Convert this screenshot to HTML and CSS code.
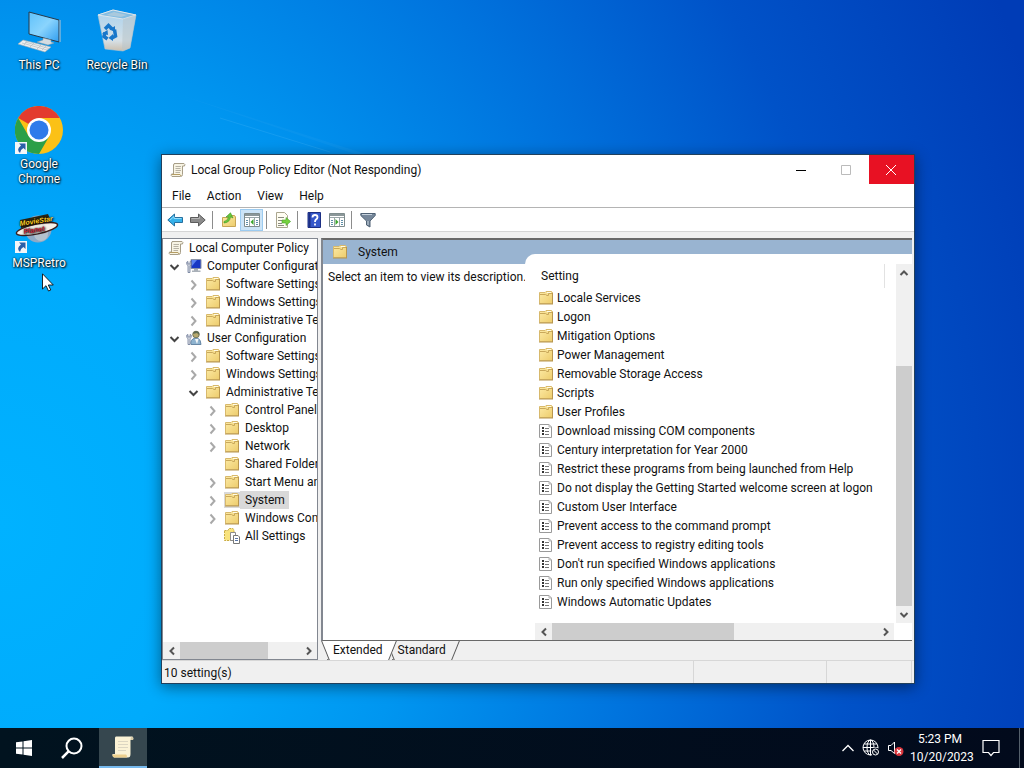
FILE: index.html
```
<!DOCTYPE html>
<html lang="en">
<head>
  <meta charset="UTF-8" />
  <title>Local Group Policy Editor</title>
  <link rel="stylesheet" href="styles.css">
</head>
<body>

  <!-- shared icons -->
  <svg class="defs" aria-hidden="true">
    <defs>
      <linearGradient id="gFolder" x1="0" y1="0" x2="1" y2="1">
        <stop offset="0" stop-color="#fdeba6"/><stop offset="1" stop-color="#edcc6c"/>
      </linearGradient>
      <linearGradient id="gScreen" x1="0" y1="0" x2="1" y2="1">
        <stop offset="0" stop-color="#5fc1fb"/><stop offset="0.5" stop-color="#8ad4fd"/><stop offset="1" stop-color="#2f9df0"/>
      </linearGradient>
      <linearGradient id="gBin" x1="0" y1="0" x2="0" y2="1">
        <stop offset="0" stop-color="#a9d2ee"/><stop offset="0.75" stop-color="#d6e0e6"/><stop offset="1" stop-color="#cbbfae"/>
      </linearGradient>
    </defs>
    <symbol id="folder" viewBox="0 0 16 16">
      <path d="M1.500 2.500H7L8 1.500H13.500L14.500 2.500V13.500H1.500Z" fill="url(#gFolder)" stroke="#d8b96c"/>
      <path d="M2 4.500H7.500L9 5.500H10.500V3.500H14" fill="none" stroke="#c9a85a"/>
      <path d="M9 2.500H13" stroke="#fffbe8"/>
      <path d="M1 14H15M14.500 3V14" stroke="#b8964e"/>
    </symbol>
    <symbol id="setting" viewBox="0 0 16 16">
      <path d="M1.500 1.500H11L13.500 4V14.500H1.500Z" fill="#fff" stroke="#9a9a9a"/>
      <path d="M11 1.500V4H13.500" fill="none" stroke="#b5b5b5"/>
      <path d="M4 4H6V6H4ZM4 7H6V9H4ZM4 10H6V12H4Z" fill="#333"/>
      <path d="M7 5.500H11M7 8.500H11M7 11.500H11" stroke="#777"/>
    </symbol>
    <symbol id="scroll" viewBox="0 0 16 16">
      <path d="M4 1.500H14Q15.500 2 14.500 4H12.500V12.500Q12.500 14.500 10.500 14.500H2Q.5 13.500 1.500 12H3.500V3Q3.500 1.500 5 1.500Z" fill="#f8f4e4" stroke="#a79e88"/>
      <path d="M5.500 4.500H11M5.500 6.500H10.500M5.500 8.500H11M5.500 10.500H10" stroke="#b7b2a4"/>
      <path d="M2 12.500H10L11 14" fill="none" stroke="#b59d64"/>
    </symbol>
    <symbol id="computer" viewBox="0 0 16 16">
      <path d="M5 1.500H15V10.500H5Z" fill="#1838c4" stroke="#8a93a8"/>
      <path d="M6 2H11L6 8Z" fill="#5b84f2"/>
      <path d="M8 11H12V12.500H14.500V14H6V12.500H8Z" fill="#a9b0b8"/>
      <path d="M.8 4V6.500L2 7.500V14.500H4V7.500L5.200 6.500V4L4 3.500V6H2V3.500Z" fill="#d8dce2" stroke="#5c6c8c" stroke-width=".7"/>
    </symbol>
    <symbol id="user" viewBox="0 0 16 16">
      <path d="M5 14.500Q4 9.500 9 8H11.500Q15 9.500 15 14.500Z" fill="#8eb3cf" stroke="#6787a5"/>
      <circle cx="10" cy="4.500" r="3.300" fill="#b8aa6e" stroke="#63664c" stroke-width=".8"/>
      <path d="M7 4Q8 0 11 1.200Q14 2 13 5L11 3Z" fill="#5d6a53"/>
      <path d="M9 9L11 14L12.500 9Z" fill="#f3f6f8"/>
      <path d="M.8 5V7.500L2 8.500V14.500H4V8.500L5.200 7.500V5L4 4.500V7H2V4.500Z" fill="#e2e5ea" stroke="#5c6c8c" stroke-width=".7"/>
    </symbol>
    <symbol id="allset" viewBox="0 0 16 16">
      <path d="M.5 2.500H4L5 .5H9L10 2V12.500H.5Z" fill="#f8e37e" stroke="#c9ab45" stroke-dasharray="2 1"/>
      <path d="M6.500 4.500H11.500V12.500H6.500Z" fill="#fff" stroke="#8d8d8d"/>
      <path d="M9.500 7.500H14L15.500 9V15.500H9.500Z" fill="#fff" stroke="#777"/>
      <path d="M11 10.500H14M11 12.500H14" stroke="#5a76a8"/>
    </symbol>
    <symbol id="right" viewBox="0 0 12 12">
      <path d="M4.500 1.500L8.500 6L4.500 10.500" fill="none" stroke="#a9a9a9" stroke-width="2"/>
    </symbol>
    <symbol id="down" viewBox="0 0 12 12">
      <path d="M2.500 4L6.500 8L10.500 4" fill="none" stroke="#444" stroke-width="2"/>
    </symbol>
    <symbol id="arrow" viewBox="0 0 12 12">
      <path d="M8 2.500L4.500 6L8 9.500" fill="none" stroke="#555" stroke-width="2"/>
    </symbol>
    <symbol id="shortcut" viewBox="0 0 12 12">
      <rect width="12" height="12" fill="#f4f6f8"/>
      <path d="M4 1.500H10.500V8L8.400 6Q5.500 7.500 5 11Q.8 7.500 6 3.600Z" fill="#2b5fa8"/>
    </symbol>
    <symbol id="pane" viewBox="0 0 16 16">
      <path d="M.5 1.500H15.500V14.500H.5Z" fill="#fff" stroke="#7f8c8d"/>
      <path d="M1 2H15V4H1Z" fill="#8b9799"/>
      <path d="M1 5.500H15M5.500 6V14M10.500 6V14" stroke="#9aa6a8"/>
      <path d="M2 8.500H4M2 10.500H4M2 12.500H4M12 8.500H14M12 10.500H14M12 12.500H14" stroke="#5f8fa8"/>
    </symbol>
  </svg>

  <main class="desktop">
    <svg class="beam" viewBox="0 0 1024 728" preserveAspectRatio="none" aria-hidden="true">
      <path d="M180 95L480 190L560 250L520 210Z" fill="#fff" opacity=".03"/>
      <path d="M220 118L330 152" stroke="#7fd0ff" opacity=".15"/>
    </svg>

    <div class="icons">
      <a class="shortcut" href="#">
        <svg viewBox="0 0 48 48">
          <path d="M14 5L44 13V35L14 27Z" fill="url(#gScreen)" stroke="#26394a"/>
          <path d="M45 13V35" stroke="#b9c8d3"/>
          <path d="M28 31L36 33V35L39 36L33 38L22 35L28 33Z" fill="#d5dce1" stroke="#8b979f" stroke-width=".5"/>
          <path d="M8 33L36 40L30 45L3 37Z" fill="#eceff1" stroke="#a2abb0" stroke-width=".6"/>
          <path d="M7 36L32 43M10 35L34 41.500M12 34L9 38M19 36L15 40M26 38L22 42M31 39L27 43" stroke="#b5bcc0" stroke-width=".7"/>
        </svg>
        <span>This PC</span>
      </a>
      <a class="shortcut" href="#">
        <svg viewBox="0 0 48 48">
          <path d="M5 8L20 3L43 8L37 41L30 44L12 42Z" fill="url(#gBin)" stroke="#b9c6ce" stroke-width=".6"/>
          <path d="M5 8L20 3L43 8L30 12Z" fill="#83bde2" stroke="#dbe6ed"/>
          <path d="M30 12L43 8L37 41L29 44Z" fill="#b8c4cb" opacity=".55"/>
          <path d="M13 8L21 5L34 8L28 10Z" fill="#a9c9dd"/>
          <g fill="none" stroke="#1877ca" stroke-width="3.500">
            <path d="M12 22L15.500 18.500L19 22"/>
            <path d="M21.500 22.500L22.500 29L18 31.500"/>
            <path d="M14.500 32L11 29.500L12 25.500"/>
          </g>
          <path d="M16.500 22.500L22 19V25ZM20 27V34L15.500 31ZM9 26.500L14.500 23L15 28Z" fill="#1877ca"/>
        </svg>
        <span>Recycle Bin</span>
      </a>
      <a class="shortcut" href="#">
        <svg viewBox="0 0 48 48">
          <circle cx="24" cy="24" r="24" fill="#fbc116"/>
          <path d="M24 24V12H44.800A24 24 0 0 0 3.200 12Z" fill="#e33b2e"/>
          <path d="M3.200 12L13.600 30L24 36L34.400 30L24 48A24 24 0 0 1 3.200 12Z" fill="#2c9f48"/>
          <circle cx="24" cy="24" r="12" fill="#fff"/>
          <circle cx="24" cy="24" r="9.500" fill="#2f7bea"/>
          <use href="#shortcut" y="36" width="12" height="12"/>
        </svg>
        <span>Google Chrome</span>
      </a>
      <a class="shortcut msp" href="#">
        <svg viewBox="0 0 48 48">
          <circle cx="23" cy="24" r="13.500" fill="#8fa9c4"/>
          <circle cx="26" cy="29" r="7" fill="#b4c1cd"/>
          <ellipse cx="22" cy="24" rx="21" ry="5" transform="rotate(-12 22 24)" fill="#f5f1ea" stroke="#3a2020" stroke-width="1.500"/>
          <path d="M5 15L33 9L36 16L6 23Z" fill="#2a2412"/>
          <g class="logo-text">
            <text x="5" y="21" transform="rotate(-9 5 21)" fill="#ffcf25">MovieStar</text>
            <text x="9" y="29" transform="rotate(-9 9 29)" fill="#c51f35">Planet</text>
          </g>
          <use href="#shortcut" y="36" width="12" height="12"/>
        </svg>
        <span>MSPRetro</span>
      </a>
    </div>

    <section class="window">
      <header class="titlebar">
        <svg class="icon"><use href="#scroll"/></svg>
        <h1>Local Group Policy Editor (Not Responding)</h1>
        <button class="control" aria-label="Minimize"><svg viewBox="0 0 10 10"><path d="M0 5.500H10" stroke="#000"/></svg></button>
        <button class="control" aria-label="Maximize"><svg viewBox="0 0 10 10"><path d="M.5 .5H9.500V9.500H.5Z" fill="none" stroke="#bbb"/></svg></button>
        <button class="control close" aria-label="Close"><svg viewBox="0 0 10 10"><path d="M0 0L10 10M10 0L0 10" stroke="#fff"/></svg></button>
      </header>

      <nav class="menubar">
        <button>File</button>
        <button>Action</button>
        <button>View</button>
        <button>Help</button>
      </nav>

      <div class="toolbar">
        <button aria-label="Back"><svg class="icon" viewBox="0 0 16 16"><path d="M.8 8L7.500 2V5.500H15.500V10.500H7.500V14Z" fill="#35b1ea" stroke="#276f9e"/><path d="M3 8L7 4.500V6.500H14.500" fill="none" stroke="#95dcfa"/></svg></button>
        <button aria-label="Forward"><svg class="icon" viewBox="0 0 16 16"><path d="M15.200 8L8.500 2V5.500H.5V10.500H8.500V14Z" fill="#8b8b8b" stroke="#5c5c5c"/><path d="M1.500 6.500H9.500V4.500" fill="none" stroke="#b5b5b5"/></svg></button>
        <i></i>
        <button aria-label="Up one level"><svg class="icon" viewBox="0 0 16 16"><path d="M1.500 5.500H8L9 3.500H13.500L14.500 5V14.500H1.500Z" fill="url(#gFolder)" stroke="#c6a555"/><path d="M3 9.500Q7 9 7.500 4.500L5 5L9.500 .8L12 6L9.500 4.800Q9 10.500 3 11Z" fill="#67c93a" stroke="#3c9424" stroke-width=".6"/></svg></button>
        <button class="on" aria-label="Show console tree"><svg class="icon" viewBox="0 0 16 16"><use href="#pane"/><path d="M9.500 7L6.500 10L9.500 13Z" fill="#3ba52d"/></svg></button>
        <i></i>
        <button aria-label="Export list"><svg class="icon" viewBox="0 0 16 16"><path d="M1.500 .5H9.500L12.500 3.500V15.500H1.500Z" fill="#fffdf2" stroke="#aaa68f"/><path d="M3 5.500H9M3 8.500H7M3 11.500H7M3 13.500H9" stroke="#8b8b80"/><path d="M7 8H11V5.500L15.600 9.500L11 13.500V11H7Z" fill="#77d13f" stroke="#48a32a" stroke-width=".6"/></svg></button>
        <i></i>
        <button aria-label="Help"><svg class="icon" viewBox="0 0 16 16"><path d="M2 .5H14.500V15.500H2Z" fill="#3557c9" stroke="#1c2f83"/><path d="M2.500 1H4.500V15H2.500Z" fill="#1c2f83"/><path d="M6.500 5.500Q6.500 3 9 3Q11.500 3 11.500 5.200Q11.500 6.500 10 7.500Q9 8.300 9 10M9 11.500V13.500" fill="none" stroke="#fff" stroke-width="1.800"/></svg></button>
        <button aria-label="Show action pane"><svg class="icon" viewBox="0 0 16 16"><use href="#pane"/><path d="M6.500 7L9.500 10L6.500 13Z" fill="#3ba52d"/></svg></button>
        <i></i>
        <button aria-label="Filter"><svg class="icon" viewBox="0 0 16 16"><path d="M.8 1.500H15.200V3.500L10 9V15L6.500 13V9L.8 3.500Z" fill="#76879a" stroke="#4f6174"/><path d="M2 2.500H12M8 9V13" stroke="#c6d2dd"/></svg></button>
      </div>

      <div class="panes">
        <div class="tree-pane">
          <ul class="tree">
            <li class="l0"><svg class="icon"><use href="#scroll"/></svg><span>Local Computer Policy</span></li>
            <li class="l1"><svg class="chev"><use href="#down"/></svg><svg class="icon"><use href="#computer"/></svg><span>Computer Configuration</span></li>
            <li class="l2"><svg class="chev"><use href="#right"/></svg><svg class="icon"><use href="#folder"/></svg><span>Software Settings</span></li>
            <li class="l2"><svg class="chev"><use href="#right"/></svg><svg class="icon"><use href="#folder"/></svg><span>Windows Settings</span></li>
            <li class="l2"><svg class="chev"><use href="#right"/></svg><svg class="icon"><use href="#folder"/></svg><span>Administrative Templates</span></li>
            <li class="l1"><svg class="chev"><use href="#down"/></svg><svg class="icon"><use href="#user"/></svg><span>User Configuration</span></li>
            <li class="l2"><svg class="chev"><use href="#right"/></svg><svg class="icon"><use href="#folder"/></svg><span>Software Settings</span></li>
            <li class="l2"><svg class="chev"><use href="#right"/></svg><svg class="icon"><use href="#folder"/></svg><span>Windows Settings</span></li>
            <li class="l2"><svg class="chev"><use href="#down"/></svg><svg class="icon"><use href="#folder"/></svg><span>Administrative Templates</span></li>
            <li class="l3"><svg class="chev"><use href="#right"/></svg><svg class="icon"><use href="#folder"/></svg><span>Control Panel</span></li>
            <li class="l3"><svg class="chev"><use href="#right"/></svg><svg class="icon"><use href="#folder"/></svg><span>Desktop</span></li>
            <li class="l3"><svg class="chev"><use href="#right"/></svg><svg class="icon"><use href="#folder"/></svg><span>Network</span></li>
            <li class="l3"><svg class="chev"></svg><svg class="icon"><use href="#folder"/></svg><span>Shared Folders</span></li>
            <li class="l3"><svg class="chev"><use href="#right"/></svg><svg class="icon"><use href="#folder"/></svg><span>Start Menu and Taskbar</span></li>
            <li class="l3 selected"><svg class="chev"><use href="#right"/></svg><svg class="icon"><use href="#folder"/></svg><span>System</span></li>
            <li class="l3"><svg class="chev"><use href="#right"/></svg><svg class="icon"><use href="#folder"/></svg><span>Windows Components</span></li>
            <li class="l3"><svg class="chev"></svg><svg class="icon"><use href="#allset"/></svg><span>All Settings</span></li>
          </ul>
          <div class="hscroll">
            <button aria-label="Scroll left"><svg class="chev"><use href="#arrow"/></svg></button>
            <div class="track"><div class="thumb tree-thumb"></div></div>
            <button aria-label="Scroll right"><svg class="chev flip"><use href="#arrow"/></svg></button>
          </div>
        </div>

        <div class="right">
          <div class="detail">
            <div class="side">
              <h2><svg class="icon"><use href="#folder"/></svg>System</h2>
              <p>Select an item to view its description.</p>
            </div>
            <div class="list-wrap">
              <div class="list">
                <div class="list-body">
                  <table>
                    <thead>
                      <tr><th>Setting</th></tr>
                    </thead>
                    <tbody>
                      <tr><td><svg class="icon"><use href="#folder"/></svg>Locale Services</td></tr>
                      <tr><td><svg class="icon"><use href="#folder"/></svg>Logon</td></tr>
                      <tr><td><svg class="icon"><use href="#folder"/></svg>Mitigation Options</td></tr>
                      <tr><td><svg class="icon"><use href="#folder"/></svg>Power Management</td></tr>
                      <tr><td><svg class="icon"><use href="#folder"/></svg>Removable Storage Access</td></tr>
                      <tr><td><svg class="icon"><use href="#folder"/></svg>Scripts</td></tr>
                      <tr><td><svg class="icon"><use href="#folder"/></svg>User Profiles</td></tr>
                      <tr><td><svg class="icon"><use href="#setting"/></svg>Download missing COM components</td></tr>
                      <tr><td><svg class="icon"><use href="#setting"/></svg>Century interpretation for Year 2000</td></tr>
                      <tr><td><svg class="icon"><use href="#setting"/></svg>Restrict these programs from being launched from Help</td></tr>
                      <tr><td><svg class="icon"><use href="#setting"/></svg>Do not display the Getting Started welcome screen at logon</td></tr>
                      <tr><td><svg class="icon"><use href="#setting"/></svg>Custom User Interface</td></tr>
                      <tr><td><svg class="icon"><use href="#setting"/></svg>Prevent access to the command prompt</td></tr>
                      <tr><td><svg class="icon"><use href="#setting"/></svg>Prevent access to registry editing tools</td></tr>
                      <tr><td><svg class="icon"><use href="#setting"/></svg>Don't run specified Windows applications</td></tr>
                      <tr><td><svg class="icon"><use href="#setting"/></svg>Run only specified Windows applications</td></tr>
                      <tr><td><svg class="icon"><use href="#setting"/></svg>Windows Automatic Updates</td></tr>
                    </tbody>
                  </table>
                  <div class="vscroll">
                    <button aria-label="Scroll up"><svg class="chev up"><use href="#arrow"/></svg></button>
                    <div class="track"><div class="thumb list-vthumb"></div></div>
                    <button aria-label="Scroll down"><svg class="chev dn"><use href="#arrow"/></svg></button>
                  </div>
                </div>
                <div class="hscroll">
                  <button aria-label="Scroll left"><svg class="chev"><use href="#arrow"/></svg></button>
                  <div class="track"><div class="thumb list-hthumb"></div></div>
                  <button aria-label="Scroll right"><svg class="chev flip"><use href="#arrow"/></svg></button>
                </div>
              </div>
            </div>
          </div>
          <div class="tabs">
            <button class="tab active">Extended</button>
            <button class="tab">Standard</button>
          </div>
        </div>
      </div>

      <footer class="status">
        <span class="grow">10 setting(s)</span>
        <span class="cell"></span>
        <span class="cell last"></span>
      </footer>
    </section>

    <svg class="cursor" viewBox="0 0 12 19"><path d="M.5 .8V16L4 12.700L6.500 18L8.800 17L6.300 12H11.300Z" fill="#fff" stroke="#111" stroke-width=".9"/></svg>
  </main>

  <footer class="taskbar">
    <button class="task" aria-label="Start"><svg viewBox="0 0 16 16" width="16" height="16"><path d="M0 2.300L6.500 1.400V7.500H0ZM7.500 1.200L16 0V7.500H7.500ZM0 8.500H6.500V14.600L0 13.700ZM7.500 8.500H16V16L7.500 14.800Z" fill="#fff"/></svg></button>
    <button class="task" aria-label="Search"><svg viewBox="0 0 22 22" width="22" height="22"><circle cx="13" cy="9" r="7.500" fill="none" stroke="#fff" stroke-width="2"/><path d="M7.800 14.200L1 21" stroke="#fff" stroke-width="2.500"/></svg></button>
    <button class="task running" aria-label="Local Group Policy Editor">
      <svg viewBox="0 0 24 24" width="24" height="24"><path d="M5 1.500H21Q23 2 22 5H19.500V19Q19.500 22.500 17 22.500H3Q1 21.500 1.500 19H4V3Q4 1.500 5 1.500Z" fill="#fbf3d6"/><path d="M1.500 19.500H15Q16 19.500 16 22.500H3Q1 21.500 1.500 19.500Z" fill="#edcf8c"/><path d="M7 6.500H17M7 9.500H17M7 12.500H17M7 15.500H15" stroke="#dcd6c2"/><path d="M19.500 5H22Q23 2.500 21 1.500Q19.500 2 19.500 5Z" fill="#d8ccaa"/></svg>
    </button>
    <div class="tray">
      <button aria-label="Show hidden icons"><svg viewBox="0 0 16 16" width="16" height="16"><path d="M2.500 11L8 5.500L13.500 11" fill="none" stroke="#fff" stroke-width="1.300"/></svg></button>
      <button aria-label="Network"><svg viewBox="0 0 18 18" width="18" height="18"><g fill="none" stroke="#fff"><circle cx="8.500" cy="8.500" r="7.500"/><ellipse cx="8.500" cy="8.500" rx="3.500" ry="7.500"/><path d="M1 8.500H16M2 5H15M2 12H11M8.500 1V16"/></g><circle cx="13.500" cy="13" r="4.500" fill="#020b1c"/><circle cx="13.500" cy="13" r="3" fill="none" stroke="#fff"/><path d="M11.500 11L15.500 15" stroke="#fff"/></svg></button>
      <button aria-label="Volume muted"><svg viewBox="0 0 18 18" width="18" height="18"><path d="M2.500 6.500H5L8.500 3V14.500L5 11.500H2.500Z" fill="none" stroke="#fff"/><circle cx="13" cy="12.500" r="4.500" fill="#d8353c"/><path d="M11 10.500L15 14.500M15 10.500L11 14.500" stroke="#fff" stroke-width="1.300"/></svg></button>
      <time class="clock">5:23 PM<br>10/20/2023</time>
      <button class="notify" aria-label="Notifications"><svg viewBox="0 0 18 18" width="18" height="18"><path d="M1 1.500H17V13.500H11.500L9 16.500L6.500 13.500H1Z" fill="none" stroke="#fff" stroke-width="1.200"/></svg></button>
      <button class="peek" aria-label="Show desktop"></button>
    </div>
  </footer>

</body>
</html>
```
FILE: styles.css
```
* {
  box-sizing: border-box;
}

body {
  margin: 0;
  height: 100vh;
  display: flex;
  flex-direction: column;
  overflow: hidden;
  font-family: Roboto, "Open Sans", sans-serif;
  font-size: 12px;
  color: #111;
}

button {
  font: inherit;
  color: inherit;
  border: 0;
  padding: 0;
  background: none;
}

svg {
  display: block;
  flex: none;
}

.defs {
  position: absolute;
  width: 0;
  height: 0;
}

.icon {
  width: 16px;
  height: 16px;
}

.chev {
  width: 12px;
  height: 12px;
}

.flip { transform: rotate(180deg); }
.up { transform: rotate(90deg); }
.dn { transform: rotate(-90deg); }

/* desktop */
.desktop {
  flex: 1;
  position: relative;
  min-height: 0;
  background: radial-gradient(ellipse 1100px 1250px at 0% 72%, #00b2ff 0%, #00abfc 20%, #0096f0 38%, #0074de 58%, #0052c8 78%, #003cb6 100%);
}

.beam {
  position: absolute;
  inset: 0;
  width: 100%;
  height: 100%;
}

.icons {
  position: relative;
  display: grid;
  grid-template-columns: 78px 78px;
  grid-auto-rows: 99px;
  padding-top: 7px;
}

.msp {
  grid-column: 1;
}

.shortcut {
  display: flex;
  flex-direction: column;
  align-items: center;
  gap: 3px;
  color: #fff;
  text-align: center;
  text-decoration: none;
  line-height: 15px;
  text-shadow: 1px 1px 2px #000, 0 0 2px #000;
}

.shortcut svg {
  width: 48px;
  height: 48px;
}

.shortcut span {
  max-width: 70px;
}

.logo-text {
  font: italic bold 7px "Liberation Sans", sans-serif;
}

.cursor {
  position: absolute;
  left: 42px;
  top: 273px;
  width: 12px;
  height: 19px;
}

/* window */
.window {
  position: absolute;
  inset: 154px 109px 44px 161px;
  display: flex;
  flex-direction: column;
  border: 1px solid #21405c;
  background: #f0f0f0;
  box-shadow: 0 3px 14px rgba(0, 0, 0, 0.45);
}

.titlebar {
  display: flex;
  align-items: center;
  height: 29px;
  padding-left: 8px;
  background: #fff;
}

.titlebar h1 {
  flex: 1;
  margin: 0 0 0 5px;
  font-size: 12px;
  font-weight: 400;
}

.control {
  display: grid;
  place-items: center;
  width: 45px;
  height: 29px;
  padding-right: 2px;
}

.control svg {
  width: 10px;
  height: 10px;
}

.close {
  background: #e81123;
}

.menubar {
  display: flex;
  height: 24px;
  padding-left: 2px;
  background: #fff;
  border-bottom: 1px solid #b4b4b4;
}

.menubar button {
  padding: 0 8px;
}

.toolbar {
  display: flex;
  align-items: center;
  height: 24px;
  padding-left: 1px;
  background: #fff;
  border-bottom: 1px solid #d5d5d5;
}

.toolbar button {
  display: grid;
  place-items: center;
  width: 23px;
  height: 22px;
}

.toolbar .on {
  background: #cce4f7;
  border: 1px solid #9ccbf0;
}

.toolbar i {
  width: 1px;
  height: 18px;
  margin: 0 4px 0 3px;
  background: #8c8c8c;
}

.panes {
  flex: 1;
  display: flex;
  gap: 3px;
  min-height: 0;
  padding: 6px 2px 0 0;
}

.tree-pane {
  display: flex;
  flex-direction: column;
  width: 156px;
  border: 1px solid #828790;
  background: #fff;
}

.tree {
  flex: 1;
  min-height: 0;
  margin: 0;
  padding: 0;
  overflow: hidden;
  list-style: none;
}

.tree li {
  display: flex;
  align-items: center;
  height: 18px;
  white-space: nowrap;
}

.tree .chev {
  margin: 2px 6px 0 0;
}

.tree span {
  padding: 0 4px 0 5px;
  line-height: 18px;
}

.l0, .l1 { padding-left: 5px; }
.l2 { padding-left: 24px; }
.l3 { padding-left: 43px; }

.selected span,
.selected .icon {
  background: #d9d9d9;
}

/* scrollbars */
.hscroll,
.vscroll {
  display: flex;
  background: #f0f0f0;
}

.hscroll {
  height: 17px;
}

.vscroll {
  flex-direction: column;
  width: 16px;
}

.hscroll button,
.vscroll button {
  display: grid;
  place-items: center;
  width: 17px;
}

.vscroll button {
  width: 16px;
  height: 17px;
}

.track {
  flex: 1;
  display: flex;
}

.thumb {
  background: #cdcdcd;
}

.tree-thumb {
  width: 73%;
}

.list-hthumb {
  width: 56%;
}

.list-vthumb {
  align-self: flex-end;
  width: 100%;
  height: 74%;
}

/* details */
.right {
  flex: 1;
  display: flex;
  flex-direction: column;
  min-width: 0;
}

.detail {
  flex: 1;
  display: flex;
  min-height: 0;
  border: 1px solid #696969;
  border-width: 2px 0 1px 2px;
  border-left-color: #828790;
  background: #fff;
}

.side {
  width: 202px;
}

.side h2 {
  display: flex;
  align-items: center;
  gap: 10px;
  height: 24px;
  margin: 0;
  padding-left: 9px;
  background: #99b4d1;
  font-size: 12px;
  font-weight: 400;
}

.side p {
  margin: 4px 0 0 5px;
  line-height: 18px;
  white-space: nowrap;
}

.list-wrap {
  flex: 1;
  display: flex;
  min-width: 0;
  padding-top: 14px;
  background: linear-gradient(#99b4d1 24px, #fff 24px);
}

.list {
  flex: 1;
  display: flex;
  flex-direction: column;
  min-width: 0;
  padding: 10px 0 0 10px;
  border-radius: 10px 0 0 0;
  background: #fff;
}

.list-body {
  flex: 1;
  display: flex;
  justify-content: space-between;
  min-height: 0;
}

.list .hscroll {
  margin-right: 18px;
}

table {
  width: 350px;
  align-self: flex-start;
  border-collapse: collapse;
}

th {
  height: 24px;
  padding: 0 0 0 6px;
  border-right: 1px solid #e2e2e2;
  text-align: left;
  font-weight: 400;
}

td {
  display: flex;
  align-items: center;
  gap: 3px;
  height: 19px;
  padding: 0 0 0 3px;
  white-space: nowrap;
}

.tabs {
  display: flex;
  height: 19px;
  padding-left: 6px;
}

.tab {
  position: relative;
  z-index: 0;
  margin-right: 3px;
  padding: 0 6px;
  border-bottom: 1px solid #777;
}

.tab::before,
.tab::after {
  content: "";
  position: absolute;
  z-index: -1;
  top: 0;
  bottom: -1px;
  width: 60%;
  background: #f0f0f0;
}

.tab::before {
  left: -2px;
  border-left: 1px solid #555;
  transform: skewX(22deg);
}

.tab::after {
  right: -4px;
  border-right: 1px solid #555;
  transform: skewX(-22deg);
}

.active {
  z-index: 1;
}

.active::before,
.active::after {
  background: #fff;
}

.status {
  display: flex;
  height: 23px;
  padding: 0 2px;
  border-top: 1px solid #d7d7d7;
  line-height: 24px;
}

.grow {
  flex: 1;
}

.cell {
  width: 133px;
  border-left: 1px solid #d7d7d7;
}

.last {
  width: 86px;
  border-right: 1px solid #d7d7d7;
}

/* taskbar */
.taskbar {
  display: flex;
  height: 40px;
  background: linear-gradient(90deg, #01131f, #020a1c);
  color: #fff;
}

.task {
  display: grid;
  place-items: center;
  width: 48px;
}

.running {
  margin-left: 3px;
  background: #36474f;
  border-bottom: 2px solid #76b9ed;
}

.tray {
  display: flex;
  align-items: center;
  gap: 6px;
  margin-left: auto;
}

.clock {
  width: 60px;
  line-height: 18px;
  text-align: center;
}

.notify {
  margin: 0 13px 0 6px;
}

.peek {
  width: 5px;
  height: 40px;
  border-left: 1px solid #55606c;
}
```
